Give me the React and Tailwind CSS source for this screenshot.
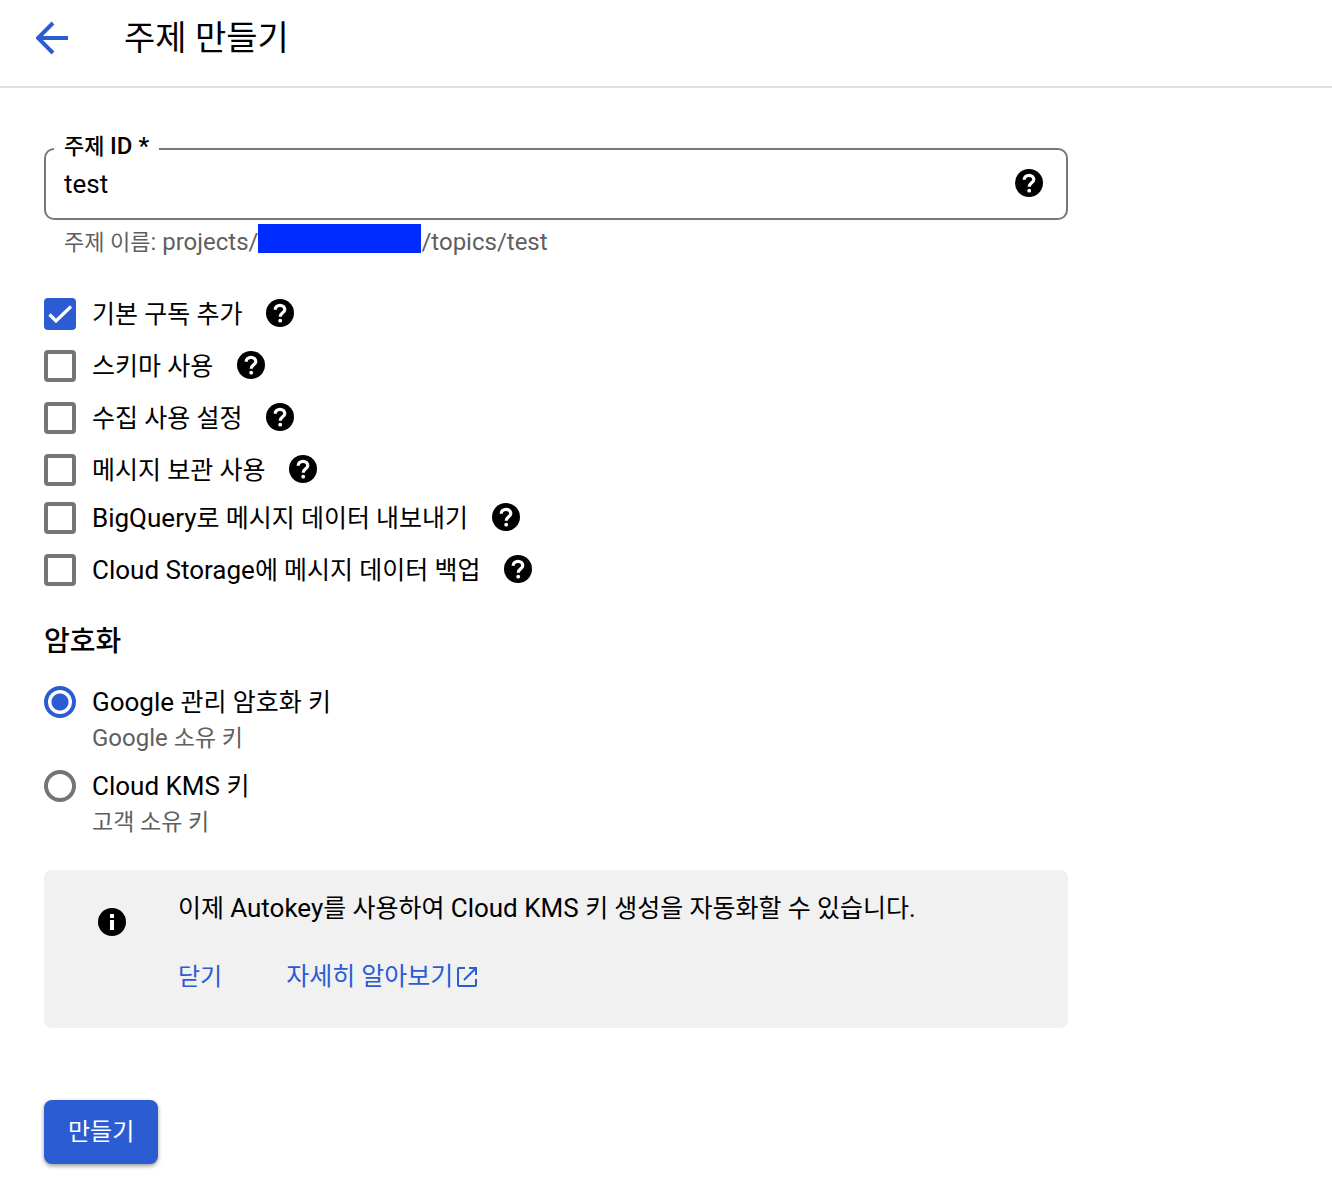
const topicOptions = [
  { id: 'subscription', parts: [['ko', '기본 구독 추가']], checked: true },
  { id: 'schema', parts: [['ko', '스키마 사용']] },
  { id: 'ingestion', parts: [['ko', '수집 사용 설정']] },
  { id: 'retention', parts: [['ko', '메시지 보관 사용']] },
]

const exportOptions = [
  { id: 'bigquery', parts: [['en', 'BigQuery'], ['ko', '로 메시지 데이터 내보내기']] },
  { id: 'storage', parts: [['en', 'Cloud Storage'], ['ko', '에 메시지 데이터 백업']] },
]

const keyOptions = [
  {
    id: 'google',
    parts: [['en', 'Google '], ['ko', '관리 암호화 키']],
    hint: [['en', 'Google '], ['ko', '소유 키']],
    checked: true,
  },
  {
    id: 'kms',
    parts: [['en', 'Cloud KMS '], ['ko', '키']],
    hint: [['ko', '고객 소유 키']],
  },
]

const bodySizes = { en: 'text-[26px]', ko: 'text-[25px]' }
const hintSizes = { en: 'text-[24px]', ko: 'text-[23px]' }

// Hangul sits a step smaller than the Latin text beside it
function MixedText({ parts, sizes = bodySizes }) {
  return parts.map(([script, text], idx) => (
    <span key={idx} className={sizes[script]}>{text}</span>
  ))
}

function HelpButton() {
  return (
    <button type="button" aria-label="도움말" className="flex-shrink-0 pb-0.5">
      <svg viewBox="0 0 28 28" className="w-7 h-7 block" fill="none" aria-hidden="true">
        <circle cx="14" cy="14" r="14" fill="black" />
        <path d="M9.200 10.800V10.500a4.800 4.200 0 0 1 9.600 0c0 3.300-4.600 3.500-4.600 7.300" stroke="white" strokeWidth="3.200" />
        <circle cx="14.200" cy="21.700" r="1.900" fill="white" />
      </svg>
    </button>
  )
}

function CheckOption({ option }) {
  return (
    <div className="flex items-center h-8">
      <span className="grid w-8 h-8 flex-shrink-0">
        <input
          id={option.id}
          type="checkbox"
          defaultChecked={option.checked}
          className="peer col-start-1 row-start-1 appearance-none w-8 h-8 rounded-sm border-4 border-[#757575] checked:border-[#2c5cd1] checked:bg-[#2c5cd1]"
        />
        <svg viewBox="0 0 32 32" fill="none" className="col-start-1 row-start-1 w-8 h-8 invisible peer-checked:visible pointer-events-none" aria-hidden="true">
          <path d="M5.500 16.500l6.500 6.500L27 8.500" stroke="white" strokeWidth="3.200" />
        </svg>
      </span>
      <label htmlFor={option.id} className="ml-4 mr-6 text-[26px] leading-8">
        <MixedText parts={option.parts} />
      </label>
      <HelpButton />
    </div>
  )
}

function KeyOption({ option }) {
  return (
    <div className="flex items-start gap-4">
      <input
        id={option.id}
        type="radio"
        name="encryption"
        defaultChecked={option.checked}
        className="appearance-none w-8 h-8 flex-shrink-0 rounded-full border-4 border-[#757575] checked:border-[#2c5cd1] checked:bg-[radial-gradient(circle,#2c5cd1_8px,white_9px)]"
      />
      <label htmlFor={option.id}>
        <span className="block h-8 text-[26px] leading-8">
          <MixedText parts={option.parts} />
        </span>
        <span className="block h-8 mt-1 text-[24px] leading-8 text-[#5f5f5f]">
          <MixedText parts={option.hint} sizes={hintSizes} />
        </span>
      </label>
    </div>
  )
}

function App() {
  return (
    <div className="min-h-screen bg-white text-black font-[Roboto,'Noto_Sans_CJK_KR',sans-serif]">
      {/* Header */}
      <header className="flex items-start gap-14 h-22 px-9 pt-5 border-b-2 border-[#e0e0e0]">
        <button type="button" aria-label="뒤로">
          <svg viewBox="0 0 32 36" fill="none" className="w-8 h-9 block" aria-hidden="true">
            <path d="M32 18H3M17 3L2 18l15 15" stroke="#2c5cd1" strokeWidth="4" />
          </svg>
        </button>
        <h1 className="text-[34px] leading-9">주제 만들기</h1>
      </header>

      <main className="px-11 pt-15 pb-7">
        <form className="max-w-5xl" onSubmit={e => e.preventDefault()}>
          {/* Topic ID */}
          <div className="relative flex items-center h-18 rounded-[10px] border-2 border-[#75797f] pl-[18px] pr-[23px]">
            <label htmlFor="topic-id" className="absolute -top-5 left-2 px-2.5 bg-white text-[22px] leading-8 font-medium">
              주제 <span className="text-[24px]">ID *</span>
            </label>
            <input id="topic-id" type="text" defaultValue="test" className="flex-1 min-w-0 text-[26px] leading-8 outline-none" />
            <HelpButton />
          </div>
          <p className="flex items-start h-9 mt-1 pl-5 text-[24px] leading-9 text-[#5f5f5f]">
            <span><span className="text-[22px]">주제 이름</span>: projects/</span>
            <span className="w-[163px] h-[29px] bg-[#002bff]" />
            <span>/topics/test</span>
          </p>

          <div className="flex flex-col gap-5 mt-[38px]">
            {topicOptions.map(option => (
              <CheckOption key={option.id} option={option} />
            ))}
          </div>
          <div className="flex flex-col gap-5 mt-4">
            {exportOptions.map(option => (
              <CheckOption key={option.id} option={option} />
            ))}
          </div>

          {/* Encryption */}
          <h2 className="mt-9 text-[28px] leading-10 font-medium">암호화</h2>
          <div className="flex flex-col gap-4 mt-6">
            {keyOptions.map(option => (
              <KeyOption key={option.id} option={option} />
            ))}
          </div>

          {/* Autokey notice */}
          <section className="flex items-start mt-8 px-[54px] pt-5 pb-[33px] rounded-lg bg-[#f1f1f1]">
            <svg viewBox="0 0 28 28" className="w-7 h-7 mt-[18px] flex-shrink-0" aria-hidden="true">
              <circle cx="14" cy="14" r="14" fill="black" />
              <path d="M12 6h4v4h-4zM12 12h4v10h-4z" fill="white" />
            </svg>
            <div className="ml-[52px]">
              <p className="text-[26px] leading-9">
                <MixedText parts={[['ko', '이제 '], ['en', 'Autokey'], ['ko', '를 사용하여 '], ['en', 'Cloud KMS '], ['ko', '키 생성을 자동화할 수 있습니다.']]} />
              </p>
              <div className="flex items-center gap-16 mt-8 text-[24px] leading-9 text-[#2c5cd1]">
                <button type="button">닫기</button>
                <a href="#autokey" className="flex items-center gap-1 text-[25px]">
                  자세히 알아보기
                  <svg viewBox="0 0 20 20" fill="none" className="w-5 h-5" aria-hidden="true">
                    <path d="M8 1H2q-1 0-1 1v16q0 1 1 1h16q1 0 1-1v-6M12 1h7v7M19 1L7 13" stroke="currentColor" strokeWidth="2" />
                  </svg>
                </a>
              </div>
            </div>
          </section>

          <button type="submit" className="mt-18 h-16 px-6 rounded-lg bg-[#2c5cd1] text-white text-[24px] leading-9 shadow-[0_2px_4px_rgba(0,0,0,0.4)]">
            만들기
          </button>
        </form>
      </main>
    </div>
  )
}

export default App
